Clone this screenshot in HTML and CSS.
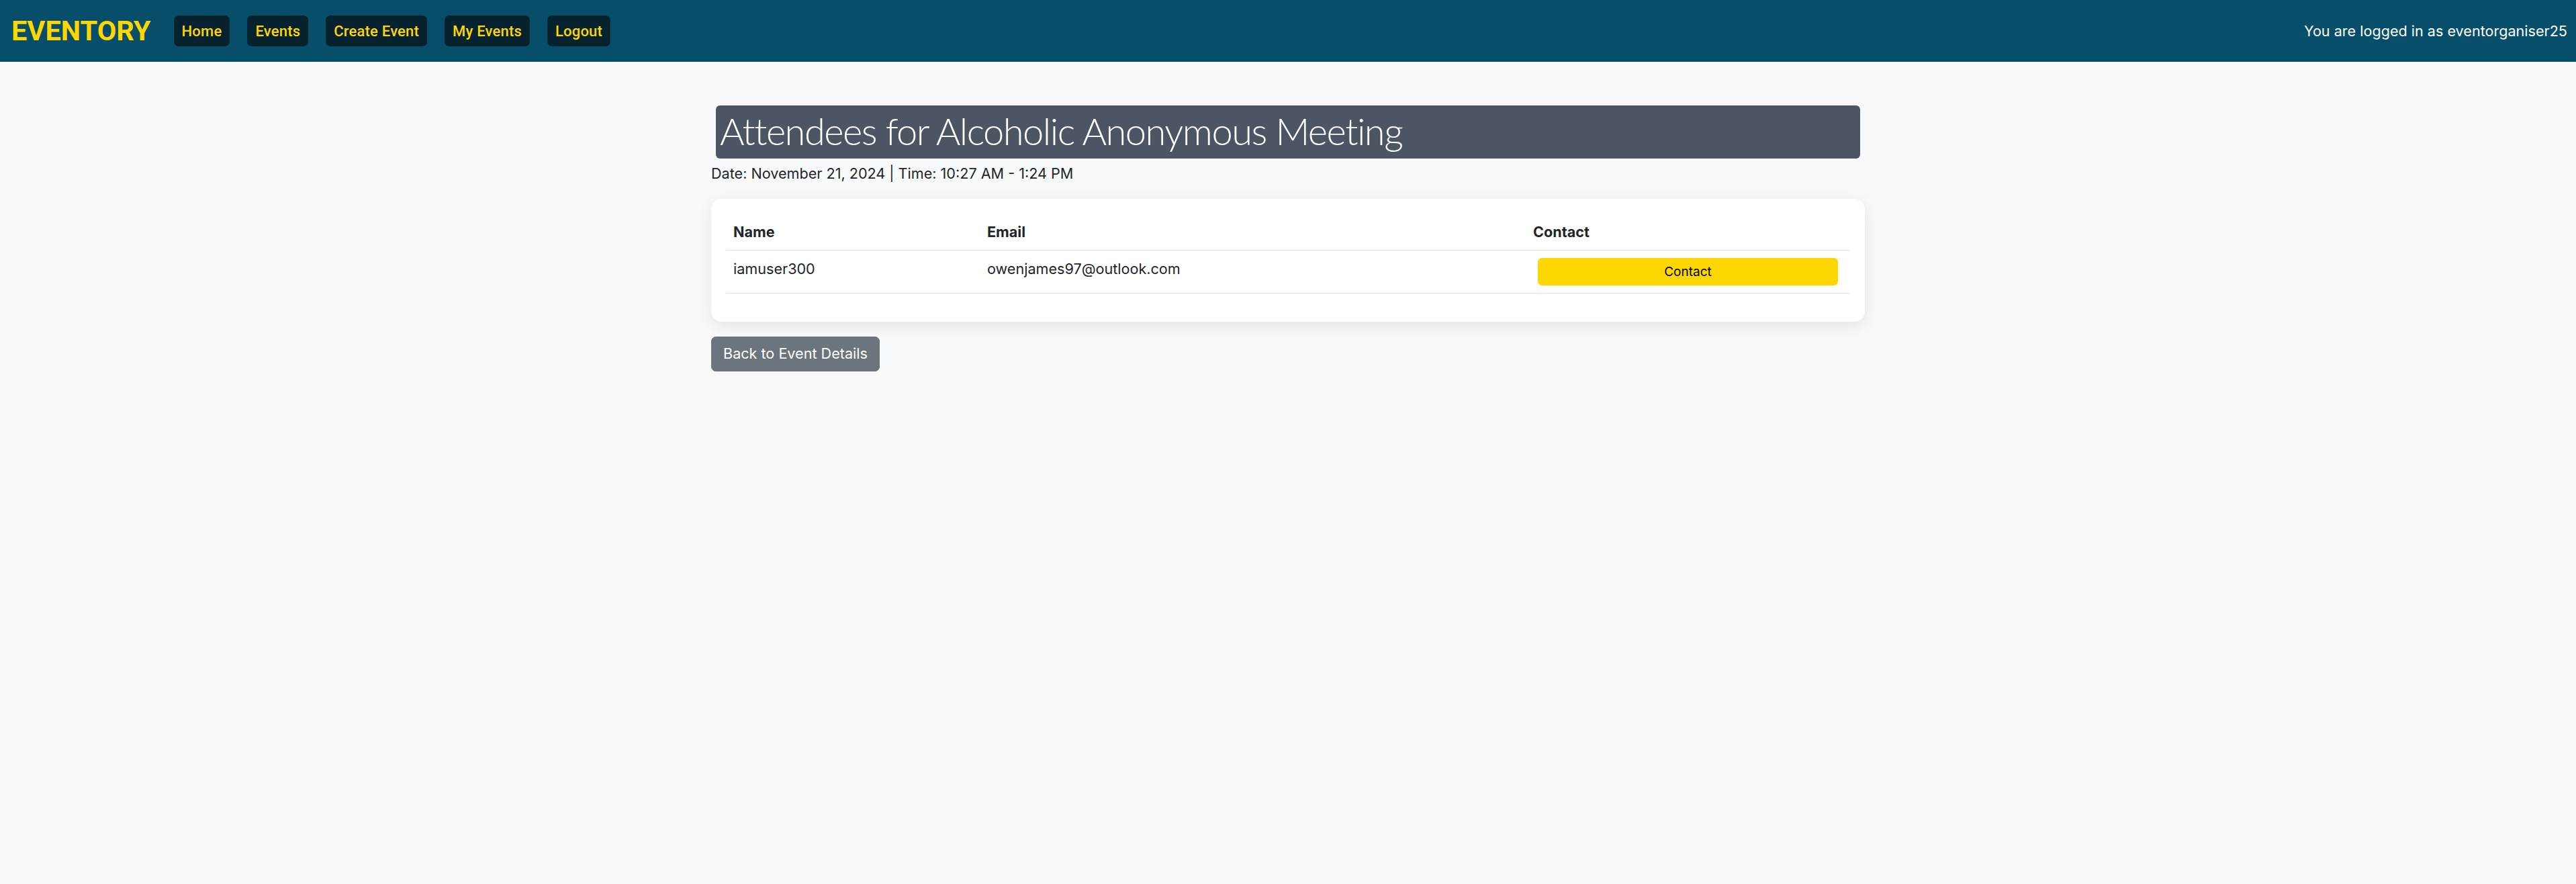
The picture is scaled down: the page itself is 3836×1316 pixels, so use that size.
FILE: index.html
```html
<!DOCTYPE html>
<html lang="en">
<head>
<meta charset="utf-8">
<title>Attendees - Eventory</title>
<link rel="stylesheet" href="styles.css">
</head>
<body>
<nav class="navbar">
  <div class="nav-left">
    <a class="brand" href="#">EVENTORY</a>
    <ul class="nav-links">
      <li><a class="nav-btn" href="#">Home</a></li>
      <li><a class="nav-btn" href="#">Events</a></li>
      <li><a class="nav-btn" href="#">Create Event</a></li>
      <li><a class="nav-btn" href="#">My Events</a></li>
      <li><a class="nav-btn" href="#">Logout</a></li>
    </ul>
  </div>
  <span class="user-info">You are logged in as eventorganiser25</span>
</nav>

<main class="container">
  <h1 class="page-title">Attendees for Alcoholic Anonymous Meeting</h1>
  <p class="event-meta">Date: November 21, 2024 | Time: 10:27 AM - 1:24 PM</p>

  <div class="card">
    <table class="table">
      <thead>
        <tr>
          <th class="col-name">Name</th>
          <th class="col-email">Email</th>
          <th class="col-contact">Contact</th>
        </tr>
      </thead>
      <tbody>
        <tr>
          <td>iamuser300</td>
          <td>owenjames97@outlook.com</td>
          <td><a class="btn-contact" href="#">Contact</a></td>
        </tr>
      </tbody>
    </table>
  </div>

  <a class="btn-back" href="#">Back to Event Details</a>
</main>
</body>
</html>
```

FILE: styles.css
```css
html, body {
  margin: 0;
  padding: 0;
}

body {
  background: #f8f9fa;
  font-family: "Inter", "Noto Sans", sans-serif;
  font-size: 21.6px;
  line-height: 33px;
  color: #212529;
  min-height: 1316px;
}

a {
  text-decoration: none;
}

.navbar {
  height: 92px;
  background: #074e6b;
  display: flex;
  align-items: center;
  justify-content: space-between;
  padding: 0 13px 0 17px;
}

.nav-left {
  display: flex;
  align-items: center;
}

.brand {
  font-family: "Roboto", "Liberation Sans", sans-serif;
  font-weight: 700;
  font-size: 41.5px;
  line-height: 1;
  color: #ffd700;
  margin-right: 34px;
}

.nav-links {
  list-style: none;
  margin: 0;
  padding: 0;
  display: flex;
  gap: 26px;
}

.nav-btn {
  display: block;
  font-family: "Roboto", "Liberation Sans", sans-serif;
  font-weight: 500;
  font-size: 22px;
  line-height: 33px;
  letter-spacing: 0.2px;
  padding: 6.5px 12px;
  background: #07222f;
  color: #ffd700;
  border-radius: 7px;
}

.user-info {
  color: #ffffff;
  font-size: 21.6px;
  line-height: 33px;
}

.container {
  width: 1718px;
  margin: 65px auto 0;
}

.page-title {
  margin: 0 7px 5.5px;
  padding: 2px 6px 5px;
  background: #4b5563;
  color: #ffffff;
  font-family: "Lato", "Roboto", sans-serif;
  font-weight: 300;
  font-size: 56px;
  letter-spacing: -1.5px;
  line-height: 72px;
  border-radius: 6px;
}

.event-meta {
  margin: 0 0 21.5px;
  font-size: 21.6px;
  line-height: 33px;
  color: #212529;
}

.card {
  background: #ffffff;
  border-radius: 16px;
  padding: 22px 22px 22px;
  box-shadow: 0 6px 22px rgba(0, 0, 0, 0.09);
}

.table {
  width: 100%;
  table-layout: fixed;
  border-collapse: collapse;
  margin-bottom: 20px;
  color: #212529;
}

.table th,
.table td {
  text-align: left;
  vertical-align: top;
  padding: 11px;
  line-height: 32px;
  border-bottom: 1px solid #dee2e6;
}

.table th {
  font-weight: 700;
}

.col-name { width: 356px; }
.col-email { width: 791px; }
.col-contact { width: 461px; }

.btn-contact {
  display: block;
  margin: 0 7px;
  padding: 5px 8px;
  border: 1px solid #ffd700;
  background: #ffd700;
  color: #000000;
  font-size: 19px;
  line-height: 29px;
  text-align: center;
  border-radius: 6px;
}

.btn-back {
  display: inline-block;
  margin-top: 22px;
  padding: 8.25px 17px;
  border: 1px solid #6c757d;
  background: #6c757d;
  color: #ffffff;
  font-size: 21.6px;
  line-height: 33px;
  border-radius: 7px;
}
```
